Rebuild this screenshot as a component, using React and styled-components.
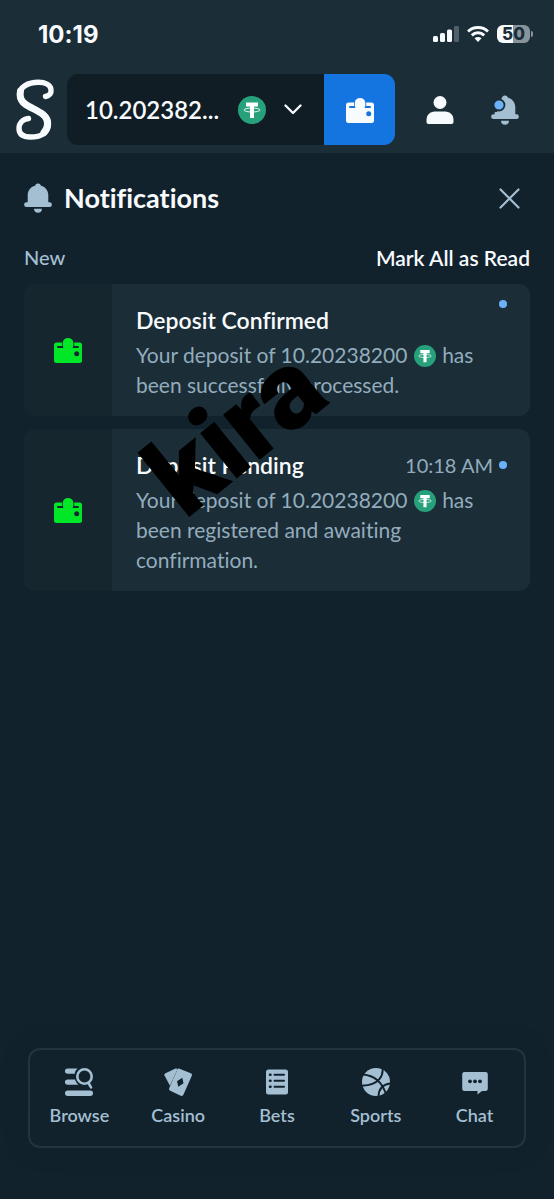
import React from "react";
import styled, { createGlobalStyle, ThemeProvider } from "styled-components";

const theme = {
  color: {
    page: "#12222c",
    header: "#1b2d37",
    card: "#1b2d37",
    cardSide: "#16262e",
    field: "#101d24",
    blue: "#1475e1",
    dot: "#6cb2fb",
    green: "#00e727",
    muted: "#93acbd",
    icon: "#a4bfd2",
    white: "#f8fbfe",
    line: "#24343d",
  },
  fontSize: {
    small: "18px",
    default: "20px",
    text: "21px",
    medium: "22px",
    title: "24px",
    big: "27px",
  },
};

const GlobalStyle = createGlobalStyle`
  * {
    box-sizing: border-box;
  }
  body {
    margin: 0;
    background-color: ${theme.color.page};
    font-family: Lato, "Liberation Sans", sans-serif;
    font-variant-ligatures: none;
  }
  button {
    padding: 0;
    border: 0;
    background: none;
    font: inherit;
    color: inherit;
    cursor: pointer;
  }
  h1, h2, p {
    margin: 0;
  }
  svg {
    display: block;
    flex-shrink: 0;
  }
`;

const Page = styled.div`
  display: flex;
  flex-direction: column;
  min-height: 100vh;
  color: ${(props) => props.theme.color.white};
`;

const StatusBar = styled.div`
  display: flex;
  align-items: center;
  justify-content: space-between;
  height: 68px;
  padding: 0 21px 0 38px;
  background-color: ${(props) => props.theme.color.header};
`;

const Clock = styled.span`
  font-family: Inter, sans-serif;
  font-size: ${(props) => props.theme.fontSize.title};
  font-weight: 700;
`;

const StatusIcons = styled.div`
  display: flex;
  align-items: center;
  gap: 8px;
`;

const Battery = styled.div`
  display: flex;
  align-items: center;
  gap: 1px;
`;

const BatteryBody = styled.span`
  width: 33px;
  height: 18px;
  border-radius: 6px;
  background: linear-gradient(90deg, #f8fbfe 50%, #88939b 50%);
  color: #1b2d38;
  font-family: Inter, sans-serif;
  font-size: 17px;
  font-weight: 800;
  line-height: 18px;
  text-align: center;
`;

const BatteryTip = styled.span`
  width: 2px;
  height: 6px;
  border-radius: 0 2px 2px 0;
  background-color: #88939b;
`;

const Header = styled.header`
  display: flex;
  align-items: center;
  height: 85px;
  padding: 0 35px 2px 14px;
  background-color: ${(props) => props.theme.color.header};
`;

const LogoLink = styled.a`
  width: 53px;
`;

const WalletBar = styled.div`
  display: flex;
  flex: 1;
  height: 71px;
  border-radius: 11px;
  overflow: hidden;
`;

const BalanceButton = styled.button`
  display: flex;
  flex: 1;
  align-items: center;
  && {
    padding: 0 22px 0 18px;
    background-color: ${(props) => props.theme.color.field};
  }
  span {
    flex: 1;
    font-size: ${(props) => props.theme.fontSize.title};
    font-weight: 600;
    text-align: left;
  }
  svg + svg {
    margin-left: 18px;
  }
`;

const WalletButton = styled.button`
  display: flex;
  align-items: center;
  justify-content: center;
  width: 71px;
  && {
    background-color: ${(props) => props.theme.color.blue};
  }
`;

const HeaderActions = styled.div`
  display: flex;
  gap: 37px;
  margin-left: 31px;
`;

const Main = styled.main`
  padding: 27px 24px 0;
`;

const TitleRow = styled.div`
  display: flex;
  align-items: center;
  height: 36px;
  padding-right: 10px;
  h1 {
    flex: 1;
    margin-left: 12px;
    font-size: ${(props) => props.theme.fontSize.big};
    font-weight: 700;
    line-height: 36px;
  }
`;

const SubRow = styled.div`
  display: flex;
  justify-content: space-between;
  margin: 26px 0 11px;
  font-size: ${(props) => props.theme.fontSize.text};
  font-weight: 600;
  line-height: 31px;
  h2 {
    color: ${(props) => props.theme.color.icon};
    font-size: ${(props) => props.theme.fontSize.default};
    font-weight: 500;
  }
`;

const CardList = styled.div`
  position: relative;
  display: flex;
  flex-direction: column;
  gap: 13px;
`;

const Card = styled.article`
  display: flex;
  border-radius: 11px;
  background-color: ${(props) => props.theme.color.card};
  overflow: hidden;
`;

const CardSide = styled.div`
  display: flex;
  align-items: center;
  justify-content: center;
  width: 88px;
  flex-shrink: 0;
  background-color: ${(props) => props.theme.color.cardSide};
`;

const CardBody = styled.div`
  flex: 1;
  padding: 16px 23px 16px 24px;
`;

const CardHead = styled.div`
  display: flex;
  align-items: center;
  height: 40px;
  h2 {
    flex: 1;
    font-size: 23px;
    font-weight: 600;
  }
  time {
    margin-right: 6px;
    color: ${(props) => props.theme.color.muted};
    font-size: ${(props) => props.theme.fontSize.default};
  }
`;

const UnreadDot = styled.span`
  align-self: ${(props) => (props.$top ? "flex-start" : "center")};
  width: 8px;
  height: 8px;
  border-radius: 50%;
  background-color: ${(props) => props.theme.color.dot};
`;

const CardText = styled.p`
  max-width: 350px;
  color: ${(props) => props.theme.color.muted};
  font-size: ${(props) => props.theme.fontSize.text};
  line-height: 30px;
  svg {
    display: inline-block;
    margin: 0 1px;
    vertical-align: -4px;
  }
`;

const Watermark = styled.span`
  position: absolute;
  top: 93px;
  left: 117px;
  color: #000;
  font-family: Roboto, sans-serif;
  font-size: 110px;
  font-weight: 900;
  line-height: 110px;
  transform: rotate(-39deg);
  pointer-events: none;
`;

const BottomNav = styled.nav`
  display: flex;
  height: 100px;
  margin: auto 28px 51px;
  border: 2px solid ${(props) => props.theme.color.line};
  border-radius: 12px;
  box-shadow: 0 0 24px #0d1c2540;
`;

const NavItem = styled.a`
  display: flex;
  flex: 1;
  flex-direction: column;
  align-items: center;
  gap: 6px;
  padding-top: 18px;
  color: ${(props) => props.theme.color.icon};
  font-size: ${(props) => props.theme.fontSize.small};
  font-weight: 600;
  line-height: 26px;
  text-decoration: none;
`;

const Logo = () => (
  <svg width="42" height="62" viewBox="0 0 42 62" fill="none" stroke="#f8fbfe" strokeLinecap="round" strokeLinejoin="round">
    <path
      d="M31.500 17.500C35.500 17 37.500 14 37 10.500C36.500 5.500 31 3.300 24.500 3.300C14 3.300 5.500 8 5.500 16C5.500 22.500 11 25.500 17 28.500C26 33 34.800 36.500 34.500 45C34.200 54 26.500 58 16.500 58C9 58 5 55 5 49.500C5 44 9 40 14.500 39.500"
      strokeWidth="5.400"
    />
    <path d="M6.500 12C4.500 22 11 25.500 17 28.500C26 33 33.800 36.500 33.500 45C33.400 48 32.500 51 30 53.500" strokeWidth="7" />
  </svg>
);

const Tether = ({ size }) => (
  <svg width={size} height={size} viewBox="0 0 28 28">
    <circle cx="14" cy="14" r="14" fill="#26a17b" />
    <path d="M8 6.500h12v4h-4v11.500h-4V10.500H8z" fill="#fff" />
    <ellipse cx="14" cy="14" rx="8" ry="2" fill="none" stroke="#fff" strokeWidth="0.900" />
  </svg>
);

const Wallet = ({ color, hole }) => (
  <svg width="28" height="26" viewBox="0 0 28 26">
    <rect x="0" y="5.500" width="28" height="20.500" rx="2.500" fill={color} />
    <rect x="3" y="9" width="22" height="2" rx="1" fill={hole} />
    <path d="M8 5h12.200v5H8z" fill={hole} />
    <path d="M9.500 11C8.600 9.500 8.700 6.500 8.800 5.500A5.300 5.300 0 0 1 19.300 5.500C19.400 6.500 19.500 9.500 18.600 11z" fill={color} />
    <circle cx="22.700" cy="16.800" r="2.500" fill={hole} />
  </svg>
);

const Bell = ({ badge }) => (
  <svg width="28" height="30" viewBox="0 0 28 30">
    <g fill="#a4bfd2">
      <path d="M14 0.500a3 3 0 0 1 3 2.200C21.500 4 24.300 7.500 24.300 12v7.300h1.200a2.300 2.300 0 0 1 0 4.800H2.500a2.300 2.300 0 0 1 0-4.800h1.200V12C3.700 7.500 6.500 4 11 2.700a3 3 0 0 1 3-2.200z" />
      <path d="M10 25.800h8c0 2.500-1.700 4-4 4s-4-1.500-4-4z" />
    </g>
    {badge && (
      <>
        <path d="M0 0H9.500L11 6L6 17H0z" fill="#1b2d37" />
        <circle cx="8" cy="10" r="5.500" fill="#6cb2fb" stroke="#1b2d37" strokeWidth="1.800" />
      </>
    )}
  </svg>
);

const navItems = [
  {
    label: "Browse",
    icon: (
      <>
        <g fill="currentColor">
          <path d="M2.500 0.500H12.500C10.800 2 10 3.500 9.700 5.700H2.500a2.600 2.600 0 0 1 0-5.200z" />
          <path d="M2.500 11.500h7.500c1 2.700 2 4 3.500 5.200H2.500a2.600 2.600 0 0 1 0-5.200z" />
          <rect x="0" y="22.500" width="28" height="5.500" rx="2.700" />
        </g>
        <g fill="none" stroke="currentColor" strokeWidth="2.600" strokeLinecap="round">
          <circle cx="19.500" cy="8.500" r="7.200" />
          <path d="M23.500 15L26 19.300" />
        </g>
      </>
    ),
  },
  {
    label: "Casino",
    icon: (
      <>
        <path d="M1.500 5.200L11.500 0.600C12.500 0.200 13.400 0.500 13.500 1.300L6 17.700L0.500 7.500C0 6.500 0.500 5.700 1.500 5.200z" fill="currentColor" />
        <path d="M15.500 0.700L26.800 5.300C28 5.800 28.200 7 27.700 8L19.500 26.500C19 27.800 18 28.200 16.800 27.700L6.200 22.700C5 22.200 4.800 21 5.300 20L13.200 2C13.700 0.800 14.500 0.400 15.500 0.700z" fill="currentColor" />
        <path d="M18.300 9.700L19.500 15.200L14.300 18.700L13 13.200z" fill="#12222c" />
      </>
    ),
  },
  {
    label: "Bets",
    icon: (
      <>
        <rect x="3" y="1.500" width="22" height="25" rx="2.500" fill="currentColor" />
        <g stroke="#12222c" strokeWidth="2" strokeLinecap="round">
          <path d="M7 6.700h0.500M7 12.700h0.500M7 18.700h0.500" strokeWidth="2.600" />
          <path d="M11.500 6.700H21M11.500 12.700H21M11.500 18.700H21" />
        </g>
      </>
    ),
  },
  {
    label: "Sports",
    icon: (
      <>
        <circle cx="14" cy="14" r="14" fill="currentColor" />
        <g fill="none" stroke="#12222c" strokeWidth="1.900">
          <path d="M20.500 -0.500C21.500 7 18 17 0 17.700" />
          <path d="M1 6.500C12 7.500 20 14 24 26" />
          <path d="M28.500 15.500C21 16.500 16.500 21 16.500 29" />
        </g>
      </>
    ),
  },
  {
    label: "Chat",
    icon: (
      <>
        <path d="M3.500 4h21a2.300 2.300 0 0 1 2.300 2.300v14.400a2.300 2.300 0 0 1-2.300 2.300h-3.500L16.500 26.500V23h-13a2.300 2.300 0 0 1-2.300-2.300V6.300A2.300 2.300 0 0 1 3.500 4z" fill="currentColor" />
        <g fill="#12222c">
          <circle cx="9" cy="13.300" r="1.900" />
          <circle cx="14" cy="13.300" r="1.900" />
          <circle cx="19" cy="13.300" r="1.900" />
        </g>
      </>
    ),
  },
];

const notifications = [
  { title: "Deposit Confirmed", amount: "10.20238200", rest: "has been successfully processed." },
  { title: "Deposit Pending", time: "10:18 AM", amount: "10.20238200", rest: "has been registered and awaiting confirmation." },
];

const App = () => {
  return (
    <ThemeProvider theme={theme}>
      <GlobalStyle />
      <Page>
        <StatusBar>
          <Clock>10:19</Clock>
          <StatusIcons>
            <svg width="26" height="16" viewBox="0 0 26 16" fill="#f8fbfe">
              <rect x="0" y="10" width="5" height="6" rx="1.500" />
              <rect x="7" y="7" width="5" height="9" rx="1.500" />
              <rect x="14" y="3.500" width="5" height="12.500" rx="1.500" />
              <rect x="21" y="0" width="5" height="16" rx="1.500" opacity="0.250" />
            </svg>
            <svg width="22" height="16" viewBox="0 0 22 16">
              <g fill="none" stroke="#f8fbfe" strokeWidth="3">
                <path d="M1 5.500C6.500 0.300 15.500 0.300 21 5.500" />
                <path d="M4.800 9.300C8.300 6 13.700 6 17.200 9.300" />
              </g>
              <path d="M7.500 12.200C9.500 10.500 12.500 10.500 14.500 12.200L11 16z" fill="#f8fbfe" />
            </svg>
            <Battery>
              <BatteryBody>50</BatteryBody>
              <BatteryTip />
            </Battery>
          </StatusIcons>
        </StatusBar>
        <Header>
          <LogoLink href="#" aria-label="Home">
            <Logo />
          </LogoLink>
          <WalletBar>
            <BalanceButton>
              <span>10.202382...</span>
              <Tether size={28} />
              <svg width="18" height="11" viewBox="0 0 18 11" fill="none" stroke="#f8fbfe" strokeWidth="2.300" strokeLinecap="round" strokeLinejoin="round">
                <path d="M1.500 1.500L9 9L16.500 1.500" />
              </svg>
            </BalanceButton>
            <WalletButton aria-label="Wallet">
              <Wallet color="#f8fbfe" hole="#1475e1" />
            </WalletButton>
          </WalletBar>
          <HeaderActions>
            <button aria-label="Profile">
              <svg width="28" height="28" viewBox="0 0 28 28" fill="#f8fbfe">
                <circle cx="14" cy="6.500" r="6.500" />
                <path d="M9 15.500h10c5 0 8.500 3.500 8.500 8.500v2a2 2 0 0 1-2 2h-23a2 2 0 0 1-2-2v-2c0-5 3.500-8.500 8.500-8.500z" />
              </svg>
            </button>
            <button aria-label="Notifications">
              <Bell badge />
            </button>
          </HeaderActions>
        </Header>
        <Main>
          <TitleRow>
            <Bell />
            <h1>Notifications</h1>
            <button aria-label="Close">
              <svg width="21" height="21" viewBox="0 0 21 21" stroke="#a4bfd2" strokeWidth="2.200" strokeLinecap="round">
                <path d="M1.500 1.500L19.500 19.500M19.500 1.500L1.500 19.500" />
              </svg>
            </button>
          </TitleRow>
          <SubRow>
            <h2>New</h2>
            <button>Mark All as Read</button>
          </SubRow>
          <CardList>
            {notifications.map((item) => (
              <Card key={item.title}>
                <CardSide>
                  <Wallet color={theme.color.green} hole={theme.color.cardSide} />
                </CardSide>
                <CardBody>
                  <CardHead>
                    <h2>{item.title}</h2>
                    {item.time && <time>{item.time}</time>}
                    <UnreadDot $top={!item.time} />
                  </CardHead>
                  <CardText>
                    Your deposit of {item.amount} <Tether size={22} /> {item.rest}
                  </CardText>
                </CardBody>
              </Card>
            ))}
            <Watermark>kira</Watermark>
          </CardList>
        </Main>
        <BottomNav>
          {navItems.map((item) => (
            <NavItem href="#" key={item.label}>
              <svg width="28" height="28" viewBox="0 0 28 28">
                {item.icon}
              </svg>
              {item.label}
            </NavItem>
          ))}
        </BottomNav>
      </Page>
    </ThemeProvider>
  );
};

export default App;
